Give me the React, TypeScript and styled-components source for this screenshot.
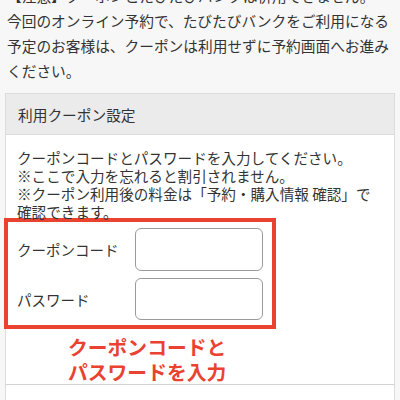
import styled, { createGlobalStyle } from "styled-components";

const GlobalStyle = createGlobalStyle`
	html, body {
		margin: 0;
		padding: 0;
		background: #f7f7f7;
	}

	body {
		font-family: "Noto Sans CJK JP", "Noto Sans", sans-serif;
		color: #333;
		overflow: hidden;
	}
`;

const Page = styled.div`
	width: 400px;
	height: 400px;
	overflow: hidden;
`;

const Scroller = styled.div`
	margin-top: -17px;
`;

const Notice = styled.p`
	margin: 0;
	padding: 0 4px 0 7px;
	font-size: 14.7px;
	line-height: 25px;
	white-space: nowrap;
`;

const Panel = styled.section`
	margin: 10px 5px 0;
	background: #fff;
	border: 1px solid #dcdcdc;
`;

const PanelHeader = styled.h2`
	margin: 0;
	padding: 0 12px;
	height: 40px;
	display: flex;
	align-items: center;
	background: #ebebeb;
	border-bottom: 1px solid #dcdcdc;
	font-size: 14.7px;
	font-weight: 400;
`;

const PanelBody = styled.div`
	padding-top: 14px;
`;

const Guide = styled.p`
	margin: 0;
	padding: 0 11px;
	font-size: 14.6px;
	line-height: 18px;
	white-space: nowrap;
`;

const Highlight = styled.div`
	margin: -3px 0 0 -2px;
	width: max-content;
	padding: 6px 9px 5px 9px;
	border: 4px solid #ea4230;
	display: grid;
	grid-template-columns: 118px 128px;
	row-gap: 7px;
	align-items: center;
`;

const Label = styled.label`
	font-size: 14.5px;
	white-space: nowrap;
`;

const Field = styled.input<{ $tall?: boolean }>`
	box-sizing: border-box;
	width: 128px;
	height: ${(p) => (p.$tall ? "43px" : "42px")};
	margin: 0;
	border: 1px solid #9a9a9a;
	border-radius: 6px;
	background: #fff;
	outline: none;
`;

const Annotation = styled.p`
	margin: 0;
	padding: 5px 0 0 62px;
	color: #ea4230;
	font-size: 19.8px;
	font-weight: 700;
	line-height: 25px;
`;

const Section = styled.div`
	border-top: 1px solid #d4d4d4;
	padding: 9px 11px;
`;

const LinkText = styled.a`
	color: #2f6fb8;
	font-size: 14.6px;
	line-height: 18px;
	text-decoration: none;
`;

export default function App() {
	return (
		<Page>
			<GlobalStyle />
			<Scroller>
				<Notice>
					【注意】クーポンとたびたびバンクは併用できません。
					<br />
					今回のオンライン予約で、たびたびバンクをご利用になる
					<br />
					予定のお客様は、クーポンは利用せずに予約画面へお進み
					<br />
					ください。
				</Notice>

				<Panel>
					<PanelHeader>利用クーポン設定</PanelHeader>
					<PanelBody>
						<Guide>
							クーポンコードとパスワードを入力してください。
							<br />
							※ここで入力を忘れると割引されません。
							<br />
							※クーポン利用後の料金は「予約・購入情報 確認」で
							<br />
							確認できます。
						</Guide>

						<Highlight>
							<Label htmlFor="coupon-code">クーポンコード</Label>
							<Field id="coupon-code" type="text" $tall />
							<Label htmlFor="coupon-pass">パスワード</Label>
							<Field id="coupon-pass" type="password" />
						</Highlight>

						<Annotation>
							クーポンコードと
							<br />
							パスワードを入力
						</Annotation>

						<Section>
							<LinkText href="#">クーポンとは</LinkText>
						</Section>
					</PanelBody>
				</Panel>
			</Scroller>
		</Page>
	);
}
